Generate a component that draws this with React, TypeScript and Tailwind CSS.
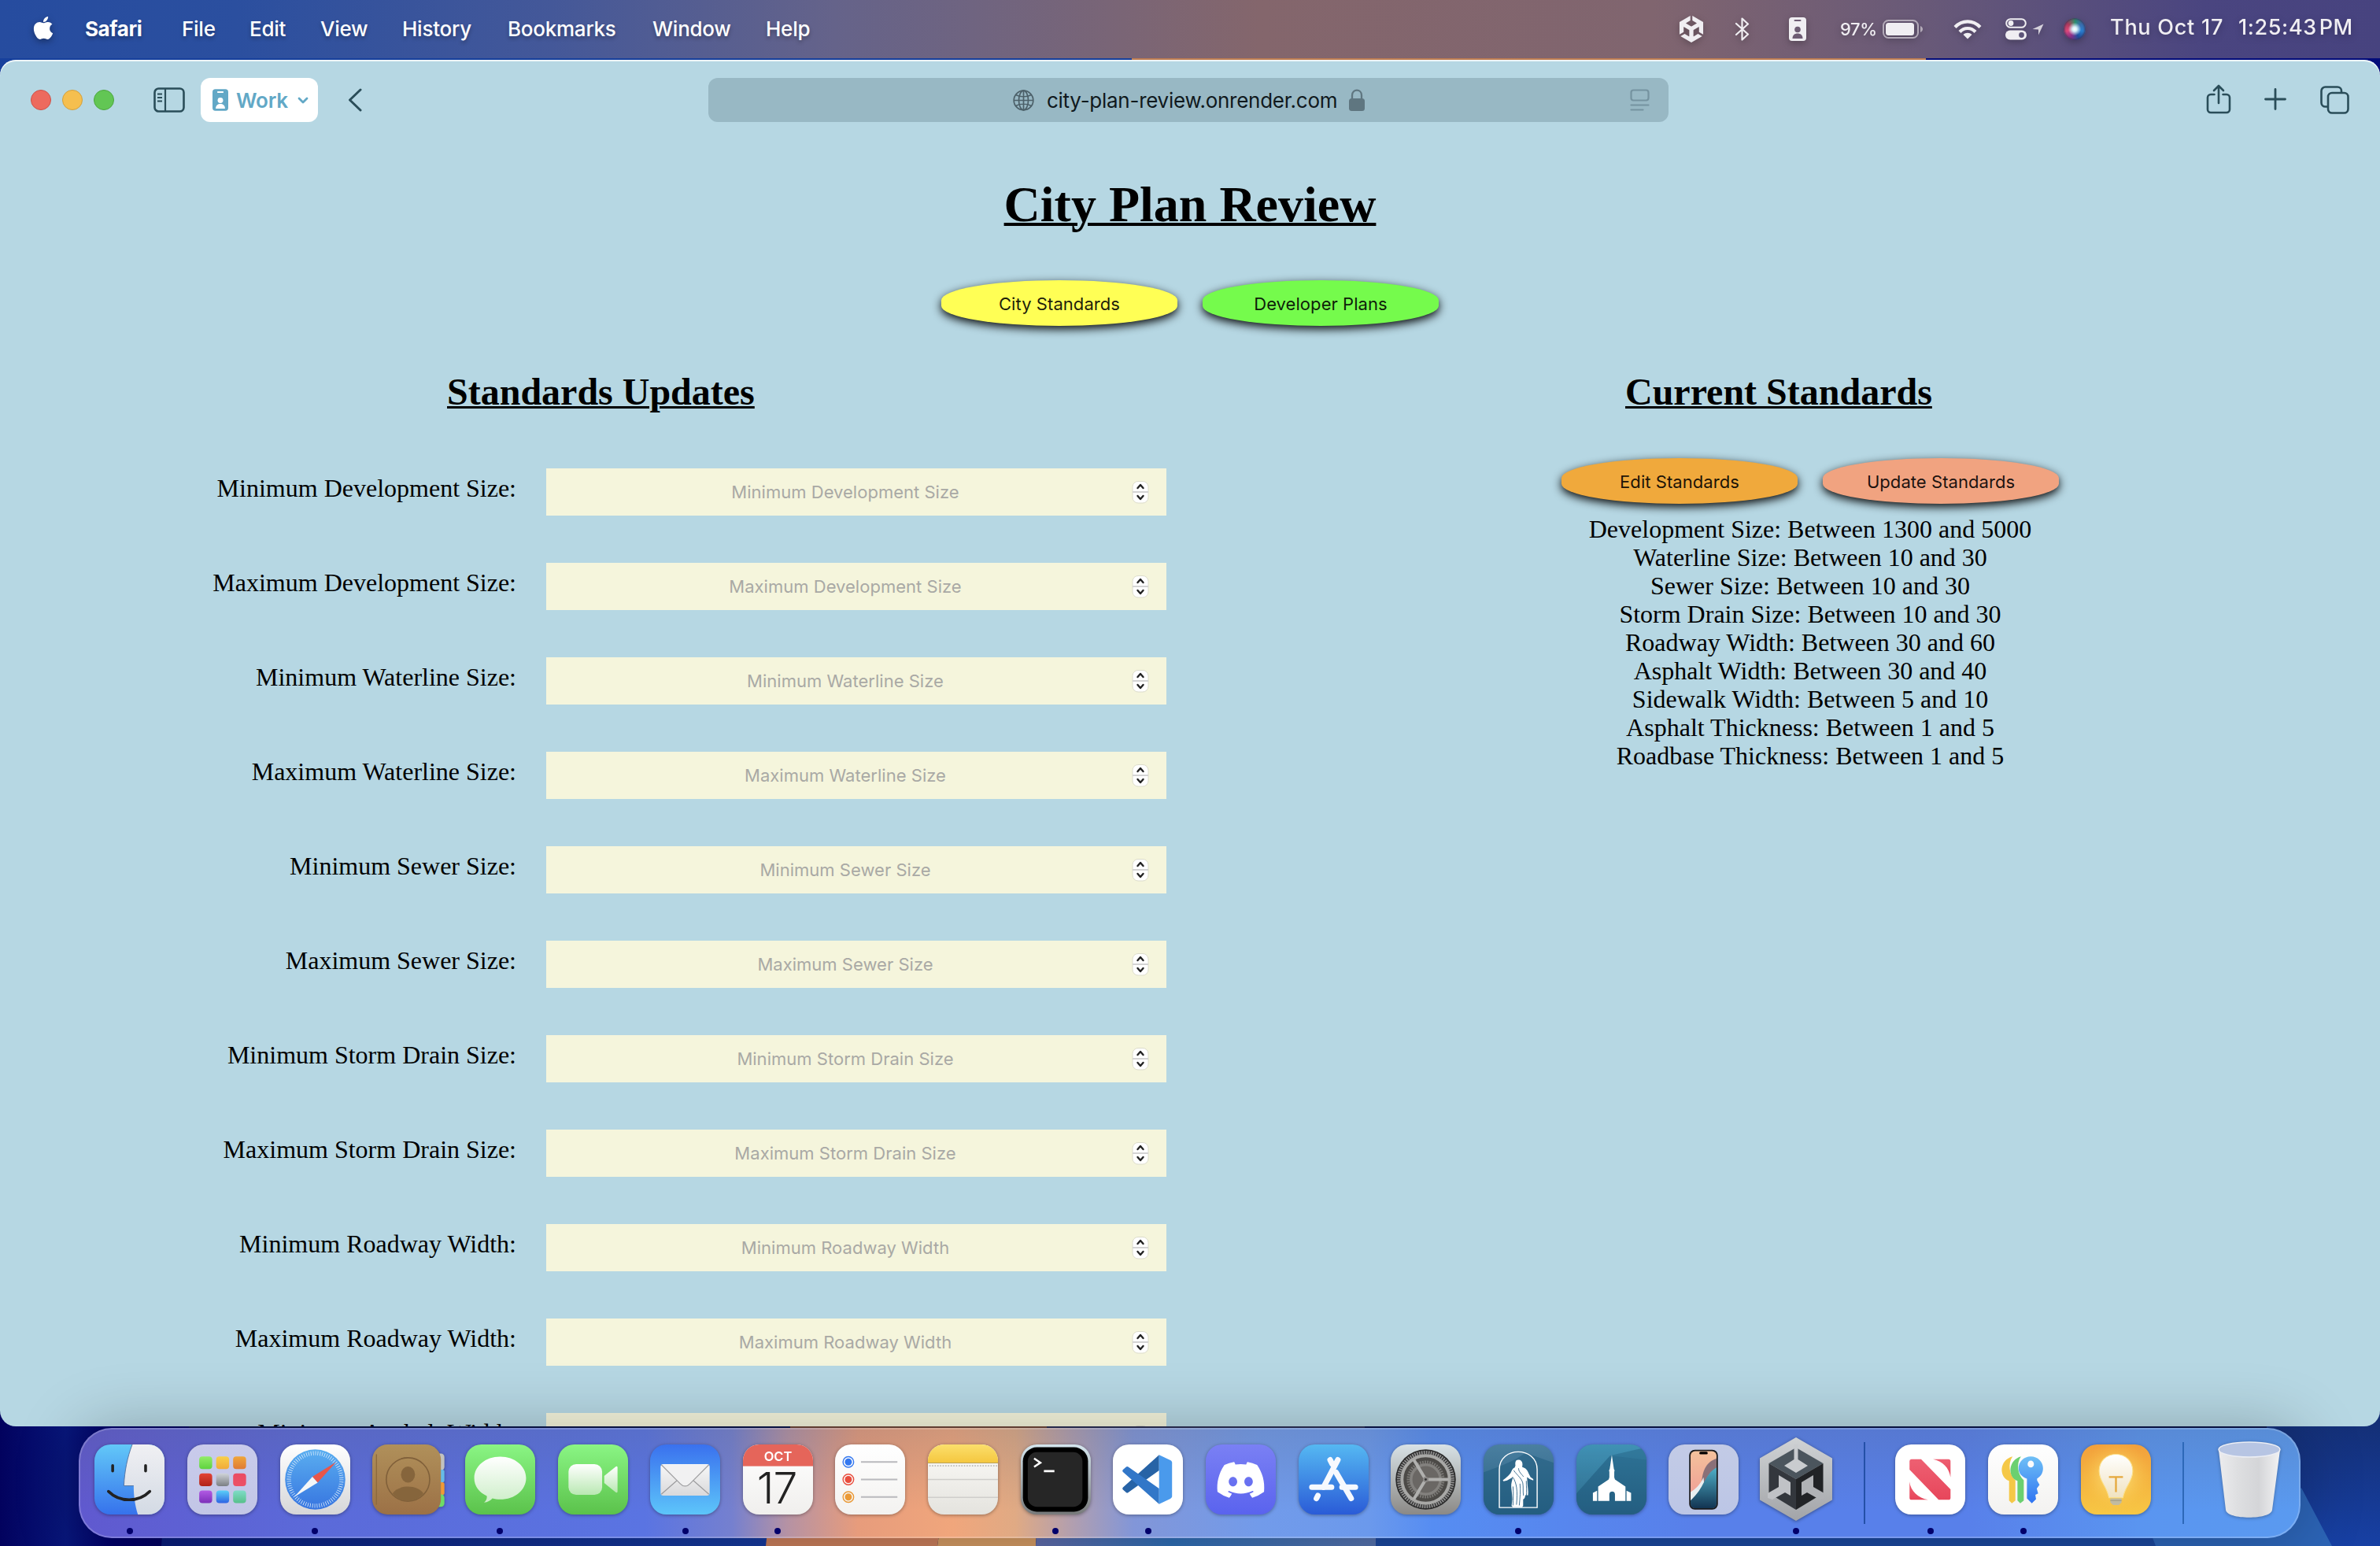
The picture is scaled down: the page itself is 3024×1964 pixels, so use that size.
import React from "react";
import { SiUnity } from "react-icons/si";
import { FaApple, FaDiscord } from "react-icons/fa";

const rows = [
  "Minimum Development Size",
  "Maximum Development Size",
  "Minimum Waterline Size",
  "Maximum Waterline Size",
  "Minimum Sewer Size",
  "Maximum Sewer Size",
  "Minimum Storm Drain Size",
  "Maximum Storm Drain Size",
  "Minimum Roadway Width",
  "Maximum Roadway Width",
  "Minimum Asphalt Width",
];

const standards = [
  "Development Size: Between 1300 and 5000",
  "Waterline Size: Between 10 and 30",
  "Sewer Size: Between 10 and 30",
  "Storm Drain Size: Between 10 and 30",
  "Roadway Width: Between 30 and 60",
  "Asphalt Width: Between 30 and 40",
  "Sidewalk Width: Between 5 and 10",
  "Asphalt Thickness: Between 1 and 5",
  "Roadbase Thickness: Between 1 and 5",
];

const menus = [
  { label: "Safari", cls: "w-[123px] font-bold tracking-[-0.4px]" },
  { label: "File", cls: "w-[86px]" },
  { label: "Edit", cls: "w-[90px]" },
  { label: "View", cls: "w-[104px]" },
  { label: "History", cls: "w-[134px]" },
  { label: "Bookmarks", cls: "w-[184px]" },
  { label: "Window", cls: "w-[144px]" },
  { label: "Help", cls: "w-[1161px]" },
];

function BadgeIcon({ cls, hole }: { cls: string; hole: string }) {
  return (
    <svg className={cls} viewBox="0 0 22 30">
      <rect width="22" height="30" rx="4" fill="currentColor" />
      <rect x="6.5" y="3" width="9" height="2" rx="1" fill={hole} />
      <circle cx="11" cy="15.5" r="3.8" fill={hole} />
      <path d="M4.5 27c0-4.500 3-6.500 6.500-6.500s6.500 2 6.500 6.500z" fill={hole} />
    </svg>
  );
}

function MenuBar() {
  return (
    <header className="flex h-[74px] shrink-0 items-center bg-[linear-gradient(90deg,#264c9f_0px,#2b4f9f_300px,#445899_700px,#65638a_1060px,#84666c_1600px,#80656f_2100px,#685978_2450px,#4a4580_2800px,#47437f_3024px)] pl-[41px] text-[26px] font-medium text-white">
      <FaApple className="-mt-1 mr-[39px] h-[33px] w-[28px] drop-shadow-[0_3px_4px_rgba(0,0,0,0.35)]" />
      <nav className="flex tracking-[-0.25px] [text-shadow:0_3px_5px_rgba(0,0,0,0.3)]">
        {menus.map((m) => (
          <span key={m.label} className={"-mt-[2px] whitespace-nowrap " + m.cls}>
            {m.label}
          </span>
        ))}
      </nav>
      <div className="flex items-center text-[#f0eef2] drop-shadow-[0_3px_4px_rgba(0,0,0,0.25)]">
        <SiUnity className="-ml-[2px] h-[34px] w-[34px]" />
        <svg className="ml-[38px] h-[30px] w-[20px]" viewBox="0 0 20 30" fill="none" stroke="currentColor" strokeWidth="2.200" strokeLinejoin="round" strokeLinecap="round">
          <path d="M2 8l15 13.500-7.500 7V1.500L17 8.500 2 22" />
        </svg>
        <BadgeIcon cls="ml-[49px] h-[30px] w-[22px]" hole="#6e5c74" />
        <span className="ml-[43px] w-[54px] text-[22px] tracking-[-0.4px]">97%</span>
        <svg className="h-[24px] w-[52px]" viewBox="0 0 52 24">
          <rect x="1" y="1" width="44" height="22" rx="6.500" fill="none" stroke="#b3aab8" strokeWidth="2" />
          <rect x="4" y="4" width="36" height="16" rx="3.500" fill="currentColor" />
          <path d="M48 8c4 1.500 4 6.500 0 8z" fill="#b3aab8" />
        </svg>
        <svg className="ml-[38px] h-[26px] w-[36px]" viewBox="0 0 36 26" fill="none" stroke="currentColor" strokeWidth="4.200">
          <path d="M2 10.500c9-9.500 23-9.500 32 0" />
          <path d="M8 16.500c5.500-6 14.500-6 20 0" />
          <path d="M18 25.500l-5.500-5.500c3-3 8-3 11 0z" fill="currentColor" stroke="none" />
        </svg>
        <svg className="ml-[30px] h-[28px] w-[27px]" viewBox="0 0 27 28">
          <rect x="1.200" y="1.200" width="24.600" height="10.600" rx="5.300" fill="none" stroke="currentColor" strokeWidth="2" />
          <circle cx="7" cy="6.500" r="3.400" fill="currentColor" />
          <rect x="0" y="15.500" width="27" height="12" rx="6" fill="currentColor" />
          <circle cx="20.500" cy="21.500" r="3.400" fill="#5d5478" />
        </svg>
        <svg className="ml-[7px] h-[15px] w-[15px]" viewBox="0 0 15 15">
          <path d="M14.500.500L8 14.500V7.500L.500 7z" fill="#d6d2dc" />
        </svg>
        <span className="ml-[25px] size-[28px] rounded-full bg-[radial-gradient(circle_at_50%_50%,#fff_0%,#d8f0f8_14%,transparent_42%),conic-gradient(from_0deg,#2c8f6c,#3a6fae,#2a7fd0,#1e4e9e,#8a2f8a,#e0487a,#b03a5c,#3b8a66)] shadow-[inset_0_0_3px_1px_#3a3358]" />
        <span className="-mt-[4px] ml-[31px] w-[163px] text-[27px] tracking-[0.75px] whitespace-nowrap">Thu Oct 17</span>
        <span className="-mt-[4px] text-[27px] tracking-[0.6px] whitespace-nowrap">1:25:43&#8202;PM</span>
      </div>
    </header>
  );
}

function Toolbar() {
  return (
    <div className="flex h-[102px] shrink-0 items-center pl-[39px] text-[#2a4d59]">
      <div className="flex gap-[14px]">
        <span className="size-[26px] rounded-full border border-[#cf5047] bg-[#ed6a5e]" />
        <span className="size-[26px] rounded-full border border-[#d3a03c] bg-[#f5bf4f]" />
        <span className="size-[26px] rounded-full border border-[#4ca63d] bg-[#62c654]" />
      </div>
      <svg className="ml-[50px] h-[32px] w-[40px]" viewBox="0 0 40 32" fill="none" stroke="currentColor" strokeWidth="2.600">
        <rect x="1.500" y="1.500" width="37" height="29" rx="5" />
        <path d="M15 2v28M5 8.500h6M5 13h6M5 17.500h6" strokeWidth="2.200" />
      </svg>
      <div className="ml-[20px] flex h-[56px] w-[149px] items-center rounded-[12px] bg-white pl-[15px] text-[#62a8c6]">
        <BadgeIcon cls="h-[28px] w-[20px]" hole="#fff" />
        <span className="ml-[10px] w-[78px] text-[26px] font-semibold tracking-[-0.2px]">Work</span>
        <svg className="h-[9px] w-[14px]" viewBox="0 0 14 9" fill="none" stroke="currentColor" strokeWidth="2.800" strokeLinecap="round" strokeLinejoin="round">
          <path d="M2 2l5 5 5-5" />
        </svg>
      </div>
      <svg className="ml-[38px] h-[30px] w-[18px]" viewBox="0 0 18 30" fill="none" stroke="currentColor" strokeWidth="3" strokeLinecap="round" strokeLinejoin="round">
        <path d="M16 2L2.500 15 16 28" />
      </svg>
      <div className="ml-[440px] flex h-[56px] w-[1220px] items-center rounded-[12px] bg-[#98b8c4] text-[#10191d]">
        <svg className="ml-[387px] size-[27px] text-[#4c6069]" viewBox="0 0 27 27" fill="none" stroke="currentColor" strokeWidth="1.700">
          <circle cx="13.500" cy="13.500" r="12.300" />
          <ellipse cx="13.500" cy="13.500" rx="6" ry="12.300" />
          <path d="M13.500 1v25M1 13.500h25M3.500 6.500c6 3 14 3 20 0M3.500 20.500c6-3 14-3 20 0" />
        </svg>
        <span className="ml-[16px] w-[384px] text-[26px] tracking-[-0.27px] whitespace-nowrap">city-plan-review.onrender.com</span>
        <svg className="h-[28px] w-[20px] text-[#5f7680]" viewBox="0 0 20 28">
          <rect y="12" width="20" height="16" rx="3.500" fill="currentColor" />
          <path d="M4 13V8c0-8.500 12-8.500 12 0v5" fill="none" stroke="currentColor" strokeWidth="2.300" />
        </svg>
        <svg className="ml-[337px] h-[28px] w-[25px] text-[#7593a0]" viewBox="0 0 25 28" fill="none" stroke="currentColor" strokeWidth="2.200" strokeLinecap="round">
          <rect x="1.500" y="1.500" width="22" height="13" rx="3" />
          <path d="M1.500 20.500h22M1.500 26.500h15" />
        </svg>
      </div>
      <svg className="-mt-[2px] ml-[683px] h-[38px] w-[32px]" viewBox="0 0 32 38" fill="none" stroke="currentColor" strokeWidth="2.600" strokeLinecap="round" strokeLinejoin="round">
        <path d="M10.500 13H6a4 4 0 0 0-4 4v15a4 4 0 0 0 4 4h20a4 4 0 0 0 4-4V17a4 4 0 0 0-4-4h-4.500M16 24V2M10 8l6-6 6 6" />
      </svg>
      <svg className="-mt-[2px] ml-[42px] size-[28px]" viewBox="0 0 28 28" fill="none" stroke="currentColor" strokeWidth="2.800" strokeLinecap="round">
        <path d="M14 1.500v25M1.500 14h25" />
      </svg>
      <svg className="-mt-[1px] ml-[43px] h-[36px] w-[37px]" viewBox="0 0 37 36" fill="none" stroke="currentColor" strokeWidth="2.600" strokeLinejoin="round">
        <rect x="10" y="9" width="25.500" height="25.500" rx="5" />
        <path d="M10 26.500H6.500a5 5 0 0 1-5-5v-15a5 5 0 0 1 5-5h15.500a5 5 0 0 1 5 5V9" />
      </svg>
    </div>
  );
}

function OvalButton({ label, color }: { label: string; color: string }) {
  return (
    <button
      className={
        "h-[58px] w-[300px] rounded-[50%/44%] pt-[2px] text-[22px] leading-[56px] tracking-[0.06px] text-black/90 shadow-[0_4px_12px_rgba(0,0,0,0.95)] " + color
      }
    >
      {label}
    </button>
  );
}

function Stepper() {
  return (
    <svg className="h-[30px] w-[22px]" viewBox="0 0 22 30" fill="none">
      <rect x="1" y="1.500" width="20" height="27.500" rx="7" fill="#fff" stroke="#dcdccb" />
      <path d="M1 15h20" stroke="#d4d4d4" strokeWidth="2" />
      <path d="M7.500 10l3.500-4 3.500 4M7.500 20l3.500 4 3.500-4" stroke="#222" strokeWidth="2.400" strokeLinecap="round" strokeLinejoin="round" />
    </svg>
  );
}

function Page() {
  return (
    <main className="flex flex-1 flex-col pt-[46px] font-['Liberation_Serif',serif] text-black">
      <h1 className="text-center text-[64px] leading-[72px] font-bold underline decoration-[4px] underline-offset-[2px]">City Plan Review</h1>
      <div className="mt-[60px] flex justify-center gap-[32px] font-['Inter',sans-serif]">
        <OvalButton label="City Standards" color="bg-[#ffff55]" />
        <OvalButton label="Developer Plans" color="bg-[#75fb4c]" />
      </div>
      <div className="mt-[57px] flex">
        <section className="w-[1482px]">
          <h2 className="mb-[70px] pl-[568px] text-[48px] leading-[54px] font-bold underline decoration-[3px] underline-offset-[2px]">Standards Updates</h2>
          <div className="flex flex-col gap-[60px]">
            {rows.map((label) => (
              <div key={label} className="flex h-[60px]">
                <label className="mr-[38px] w-[656px] pt-[7px] text-right text-[32px] leading-[36px] whitespace-nowrap">{label}:</label>
                <div className="flex w-[788px] items-center bg-[#f5f5dc] pr-[22px] pl-[16px] font-['Inter',sans-serif] text-[22px] tracking-[0.02px] text-[#a9a9a5]">
                  <span className="w-[728px] pt-[1px] text-center whitespace-nowrap">{label}</span>
                  <Stepper />
                </div>
              </div>
            ))}
          </div>
        </section>
        <section className="ml-[502px] w-[632px]">
          <h2 className="pl-[81px] text-[48px] leading-[54px] font-bold underline decoration-[3px] underline-offset-[2px]">Current Standards</h2>
          <div className="mt-[57px] flex gap-[32px] font-['Inter',sans-serif]">
            <OvalButton label="Edit Standards" color="bg-[#f0a93c]" />
            <OvalButton label="Update Standards" color="bg-[#f1a380]" />
          </div>
          <ul className="mt-[14px] text-center text-[32px] leading-[36px]">
            {standards.map((s) => (
              <li key={s}>{s}</li>
            ))}
          </ul>
        </section>
      </div>
    </main>
  );
}

function Grad({ id, a, b }: { id: string; a: string; b: string }) {
  return (
    <linearGradient id={id} x1="0" y1="0" x2="0" y2="1">
      <stop offset="0" stopColor={a} />
      <stop offset="1" stopColor={b} />
    </linearGradient>
  );
}

function Tile({ id, a, b, children }: { id: string; a: string; b: string; children?: React.ReactNode }) {
  return (
    <svg className="size-[89px] overflow-visible drop-shadow-[0_1px_2px_rgba(0,0,0,0.35)]" viewBox="0 0 100 100">
      <defs>
        <Grad id={id} a={a} b={b} />
        <clipPath id={id + "-clip"}>
          <rect width="100" height="100" rx="23" />
        </clipPath>
      </defs>
      <rect width="100" height="100" rx="23" fill={`url(#${id})`} />
      <g clipPath={`url(#${id}-clip)`}>{children}</g>
    </svg>
  );
}

const Finder = (
  <Tile id="finder" a="#62c8f8" b="#3672ec">
    <defs><Grad id="finder-r" a="#f0f0f3" b="#d3dae4" /></defs>
    <path d="M54 0C47 18 43 38 42 59h14c0 16 2 28 6 41h38V0z" fill="url(#finder-r)" />
    <path d="M54 0C47 18 43 38 42 59h14" fill="none" stroke="#4d6f9f" strokeWidth="1" />
    <path d="M26 30v8M73 30v8M20 67c16 16 43 16 59 0" fill="none" stroke="#222" strokeWidth="4" strokeLinecap="round" />
  </Tile>
);

const padColors = [
  ["#93ec68", "#5fd340"], ["#f9d049", "#f0aa3a"], ["#f0a63a", "#df7a35"],
  ["#e34335", "#b02418"], ["#cfd3d8", "#7b7f84"], ["#ea4c62", "#ec5166"],
  ["#b25be4", "#7c2fb9"], ["#5bd0f8", "#2d63e4"], ["#7fdcc8", "#57c08a"],
];
const Launchpad = (
  <Tile id="launch" a="#c9cbeb" b="#c2c6e6">
    {padColors.map(([a, b], i) => (
      <g key={i}>
        <defs><Grad id={"pad" + i} a={a} b={b} /></defs>
        <rect x={17 + (i % 3) * 24.200} y={17 + Math.floor(i / 3) * 24.300} width="18.500" height="18.200" rx="4.500" fill={`url(#pad${i})`} />
      </g>
    ))}
  </Tile>
);

const Safari = (
  <Tile id="safari" a="#ffffff" b="#d6d6d8">
    <defs><Grad id="safari-c" a="#5aaef0" b="#3775e0" /></defs>
    <circle cx="50" cy="50" r="43" fill="url(#safari-c)" />
    <circle cx="50" cy="50" r="37.500" fill="none" stroke="#d9ebfb" strokeWidth="6" strokeDasharray="0.9 2.370" />
    <path d="M80 25L53.500 54.500 46 46z" fill="#e8564a" />
    <path d="M20 75L46 46l7.500 8.500z" fill="#f4f6f8" />
  </Tile>
);

const Contacts = (
  <svg className="size-[89px] overflow-visible drop-shadow-[0_1px_2px_rgba(0,0,0,0.35)]" viewBox="0 0 100 100">
    <defs><Grad id="cont" a="#b0905a" b="#9c7146" /></defs>
    <rect x="86" y="13" width="17" height="24" rx="5" fill="#c2c2c0" />
    <rect x="86" y="36" width="17" height="18" rx="3" fill="#66bbe8" />
    <rect x="86" y="54" width="17" height="18" rx="3" fill="#f09a37" />
    <rect x="86" y="71" width="17" height="18" rx="5" fill="#6fdc66" />
    <rect width="98" height="100" rx="22" fill="url(#cont)" />
    <path d="M6 14v72" stroke="#8c6a3c" strokeWidth="1.500" />
    <circle cx="51" cy="50" r="31" fill="none" stroke="#80603a" strokeWidth="1.800" />
    <ellipse cx="51" cy="43" rx="10" ry="11.500" fill="#86653c" />
    <path d="M29 70c8-13 36-13 44 0-11 14-33 14-44 0z" fill="#86653c" />
  </svg>
);

const Messages = (
  <Tile id="msg" a="#8af584" b="#5bc24b">
    <defs><Grad id="msg-b" a="#ffffff" b="#cdeec8" /></defs>
    <path d="M50 17.500c21 0 37 13.500 37 30.500S71 78.500 50 78.500c-4 0-8-.500-11-1.500-3 3-7 5.500-12 6 3-3 4.500-6 4-9.500C20 68.500 13 59.500 13 48c0-17 16-30.500 37-30.500z" fill="url(#msg-b)" />
  </Tile>
);

const FaceTime = (
  <Tile id="ft" a="#8af584" b="#5bc24b">
    <defs><Grad id="ft-b" a="#ffffff" b="#b9e8b2" /></defs>
    <rect x="15" y="28" width="48" height="44" rx="11" fill="url(#ft-b)" />
    <path d="M66 45l16-13c2-1.500 3-.500 3 1.500v33c0 2-1 3-3 1.500L66 55z" fill="url(#ft-b)" />
  </Tile>
);

const Mail = (
  <Tile id="mail" a="#3a71ee" b="#5dc5fa">
    <defs><Grad id="mail-e" a="#f8f8f8" b="#d9d9db" /></defs>
    <rect x="15" y="28" width="70" height="45" rx="4" fill="url(#mail-e)" />
    <path d="M16 71l24-21M84 71L60 50" stroke="#9b9b9d" strokeWidth="1.300" />
    <path d="M16 29l27 27c4 4.500 10 4.500 14 0l27-27" fill="#f1f1f2" stroke="#a2a2a4" strokeWidth="1.500" />
  </Tile>
);

const Calendar = (
  <Tile id="cal" a="#ffffff" b="#f0efed">
    <rect width="100" height="31" fill="#e5655a" />
    <text x="50" y="23.500" textAnchor="middle" fontSize="18.500" fontWeight="600" fill="#fff" fontFamily="Inter, sans-serif">OCT</text>
    <text x="48.500" y="84.500" textAnchor="middle" fontSize="62" fontWeight="300" fill="#222" fontFamily="Inter, sans-serif" letterSpacing="-1">17</text>
  </Tile>
);

const Reminders = (
  <Tile id="rem" a="#ffffff" b="#f3f2f0">
    {["#3478f0", "#e94d3d", "#ea9936"].map((c, i) => (
      <g key={c}>
        <circle cx="19" cy={25 + i * 25} r="7.600" fill="none" stroke={c} strokeWidth="1.600" />
        <circle cx="19" cy={25 + i * 25} r="5" fill={c} />
        <path d={`M37 ${25 + i * 25}h52`} stroke="#b9b9bd" strokeWidth="2" />
      </g>
    ))}
  </Tile>
);

const Notes = (
  <Tile id="notes" a="#fcfbf8" b="#e4e3de">
    <defs><Grad id="notes-y" a="#fbdf6c" b="#f5c73f" /></defs>
    <rect width="100" height="26" fill="url(#notes-y)" />
    <path d="M0 26.500h100" stroke="#b9a15a" strokeWidth="1.200" />
    <path d="M2 30.500h98" stroke="#b9b8b4" strokeWidth="1.800" strokeDasharray="1.800 2" />
    <path d="M0 50h100M0 75.500h100" stroke="#cfcecb" strokeWidth="1.600" />
  </Tile>
);

const Terminal = (
  <Tile id="term" a="#d5e6ee" b="#77797a">
    <rect x="3" y="4" width="93" height="92" rx="20" fill="#000" />
    <rect x="10" y="11" width="78" height="78" rx="13" fill="#262626" />
    <path d="M19 20l9 6-9 6" fill="none" stroke="#fff" strokeWidth="2.800" />
    <path d="M33 38h15" stroke="#fff" strokeWidth="3" />
  </Tile>
);

const VSCode = (
  <Tile id="vsc" a="#ffffff" b="#ffffff">
    <path d="M66 15v22L22 68.500c-1 .800-2 .800-3 0l-4.500-4c-1-1-1-2.400 0-3.400z" fill="#2763a6" />
    <path d="M66 85V63L22 32c-1-.800-2-.800-3 0l-4.500 4c-1 1-1 2.400 0 3.400z" fill="#3277c8" />
    <path d="M66 15l16 7.500c1.500.800 2.500 2 2.500 3.500v48c0 1.500-1 2.700-2.500 3.500L66 85z" fill="#4a9aec" />
  </Tile>
);

const Discord = (
  <Tile id="disc" a="#7a80f4" b="#5a63ee">
    <FaDiscord x="13.500" y="14" size={73} color="#fff" />
  </Tile>
);

const AppStore = (
  <Tile id="apps" a="#55b8f2" b="#2a5bd7">
    <g stroke="#f6f9fe" strokeWidth="8" strokeLinecap="round">
      <path d="M56 22L35.500 61M27.500 73l-2 4" />
      <path d="M19 61h28M62 61h19" />
      <path d="M45 22l3 6M53.500 40L75 77" />
    </g>
  </Tile>
);

const Settings = (
  <Tile id="set" a="#d8e2e6" b="#8b8986">
    <circle cx="50" cy="50" r="43" fill="#2b2b2b" />
    <circle cx="50" cy="50" r="38.500" fill="none" stroke="#8f8f8f" strokeWidth="5" strokeDasharray="2 1.360" />
    <circle cx="50" cy="50" r="34" fill="#4c4a47" stroke="#a8a8a6" strokeWidth="4.500" />
    <circle cx="50" cy="50" r="25" fill="none" stroke="#7a7875" strokeWidth="4" strokeDasharray="2 1.500" />
    <circle cx="50" cy="50" r="21" fill="#6a6764" stroke="#83817e" strokeWidth="4" />
    <path d="M50 50h33M50 50L33 22M50 50L33 78" stroke="#b0b0ae" strokeWidth="4.500" />
    <circle cx="50" cy="50" r="4" fill="#8a8886" />
    <circle cx="50" cy="50" r="1.600" fill="#333" />
  </Tile>
);

const Christus = (
  <Tile id="chr" a="#4a7fa0" b="#285f82">
    <path d="M60 12l40 14v74H0V40C20 32 40 26 60 12z" fill="#215c80" opacity=".55" />
    <path d="M22.500 90V36c0-34 54-34 54 0v54z" fill="none" stroke="#fff" strokeWidth="1.600" />
    <path d="M49.500 22c-4 0-4.500 4-4 8l-1 3c-3 1-4 4-6 8-2 3-5 5-7 7l-4 3 1 1.500 5-1 7-4 1.500-2c-1 6-3 10-2.500 15 .500 6 1.500 12 1.500 18l-1 9 2 2h13l1.500-2v-9c2-1 3-3 3-6h4c1-6-1-13-1-19l-.500-7 4 3 5 2v-2l-4-3c-3-5-4-11-9-13l-3-1.500c1.500-4 0-10-4.500-10z" fill="#fff" />
    <path d="M43 37c6 8 11 11 13 18 1 6 0 12 1 18M42 47c5 8 7 18 5 39M50 34c0 5 4 8 7 12M42 60c1 10 0 18 0 27M52 56c1 10 0 20-1 31M61 52c0 8 1 16 0 22" fill="none" stroke="#2d6386" strokeWidth="1" />
  </Tile>
);

const Church = (
  <Tile id="chu" a="#3f8fb2" b="#285f82">
    <path d="M0 70L48 16 100 4v96H0z" fill="#215c80" opacity=".55" />
    <path d="M48 16l52 6V0H0v70z" fill="#4aa0c0" opacity=".15" />
    <path d="M50.500 15L53.500 35l1 2-.500 2v8l1 3L70 60v20.500H55V71c0-5-8-5-8 0v9.500H31V60l15-10 1-3v-8l-.500-2 1-2z" fill="#fff" />
    <path d="M29.500 66v14.500H23.500V69zM71.500 66v14.500H78V69z" fill="#fff" />
  </Tile>
);

const Phone = (
  <Tile id="ph" a="#c3cbe6" b="#bcc6e6">
    <defs><Grad id="ph-s" a="#f4c19c" b="#ef9794" /><Grad id="ph-t" a="#4fb0c8" b="#123452" /></defs>
    <rect x="29.500" y="7.500" width="41" height="85.500" rx="8" fill="#1a1a1c" />
    <rect x="31.500" y="9.500" width="37" height="81.500" rx="6.500" fill="url(#ph-s)" />
    <path d="M68.500 20C55 25 48 35 47 58l21.500-20z" fill="#8a7078" />
    <path d="M50 47C45 58 38 64 31.500 68v18l20-22z" fill="#e8eef0" />
    <path d="M68.500 33C50 44 52 62 31.500 80v5c0 4 3 6 6.500 6h24c4 0 6.500-2.500 6.500-6.500z" fill="url(#ph-t)" />
    <rect x="44" y="10.500" width="12" height="3.600" rx="1.800" fill="#000" />
  </Tile>
);

const Unity = (
  <svg className="h-[106px] w-[94px] overflow-visible drop-shadow-[0_1px_2px_rgba(0,0,0,0.4)]" viewBox="-47 -53 94 106">
    <defs><Grad id="uni" a="#d0d3d5" b="#a2a4a8" /></defs>
    <path d="M0-53L46-26.500V26.500L0 53-46 26.500V-26.500z" fill="url(#uni)" />
    <path d="M0-40L34.500-20 0 0-34.500-20z" fill="#4b555d" />
    <path d="M-34.500-20L0 0V39L-34.500 18z" fill="#33373d" />
    <path d="M34.500-20L0 0V39L34.500 18z" fill="#212326" />
    <path d="M-2.500-44h5v19L15-17 0-8-15-17l12.500-8z" fill="#c9cccf" />
    <path d="M-22-5l15 9v17l-7-4-16 9-6-2v-6l14-8z" fill="#c0c2c6" />
    <path d="M22-5L7 4v17l7-4 16 9 6-2v-6l-14-8z" fill="#b0b2b6" />
  </svg>
);

const News = (
  <Tile id="news" a="#ffffff" b="#ffffff">
    <defs><Grad id="news-r" a="#ee6072" b="#e7465b" /></defs>
    <g fill="url(#news-r)">
      <path d="M23 21h14l42 43v12a3 3 0 0 1-3 3H62L20.500 36V24a3 3 0 0 1 2.500-3z" />
      <path d="M54 21h22a3 3 0 0 1 3 3v23C77 33 68 24 54 21z" />
      <path d="M20.500 53C22 67 33 76 47 79H23.500a3 3 0 0 1-3-3z" />
    </g>
  </Tile>
);

const Passwords = (
  <Tile id="pw" a="#ffffff" b="#f3f2f0">
    <defs><Grad id="pw-b" a="#6fc0f6" b="#2f74f2" /></defs>
    <path d="M35 17C16 22 15 46 30 52v28l4 4 5-4V51c-9-8-11-24-4-34z" fill="#f5c847" />
    <path d="M47 17C29 22 27 46 42 52v28l4 4 5-4V51c-9-8-11-24-4-34z" fill="#6bd070" />
    <path d="M61 17c10 0 17.500 7.500 17.500 17 0 7-3.500 12-8.500 14.500v3l3.500 6-4 5.500 2 7-4 2 1 6-6 6-7-7V49C48 46 43.500 41 43.500 34 43.500 24.500 51 17 61 17zm0 6a4.500 5 0 1 0 .010 10 4.500 5 0 1 0-.010-10z" fill="url(#pw-b)" />
  </Tile>
);

const Tips = (
  <Tile id="tips" a="#f2a03c" b="#f7c744">
    <defs>
      <radialGradient id="tips-g" cx=".5" cy=".45" r=".5"><stop offset="0" stopColor="#ffe98a" /><stop offset="1" stopColor="#f8c545" stopOpacity="0" /></radialGradient>
      <Grad id="tips-b" a="#ffffff" b="#f0e2c0" />
    </defs>
    <rect width="100" height="100" fill="url(#tips-g)" />
    <path d="M50 14c14 0 24 10 24 24 0 15-11 21-14 38H40C37 59 26 53 26 38c0-14 10-24 24-24z" fill="url(#tips-b)" stroke="#fbe08a" strokeWidth="1.200" />
    <path d="M40 46.500h20M50 46.500V68" stroke="#e5a83c" strokeWidth="2.600" />
    <path d="M42 77h16v6l-4 3.500h-8L42 83z" fill="#c2bba0" />
    <path d="M42 80h16" stroke="#98927c" strokeWidth="1" />
  </Tile>
);

const Trash = (
  <svg className="h-[98px] w-[80px] drop-shadow-[0_1px_2px_rgba(0,0,0,0.3)]" viewBox="0 0 80 98">
    <defs>
      <linearGradient id="tr"><stop offset="0" stopColor="#ececee" /><stop offset=".3" stopColor="#dedfe1" /><stop offset=".65" stopColor="#d4d5d8" /><stop offset="1" stopColor="#f2f2f3" /></linearGradient>
    </defs>
    <path d="M1 11l9 76c1 13 58 13 59 0l10-76z" fill="url(#tr)" />
    <ellipse cx="40" cy="10.500" rx="39" ry="9.500" fill="#b7c5e3" stroke="#eceef4" strokeWidth="1.500" />
  </svg>
);

const apps = [
  { icon: Finder, on: true }, { icon: Launchpad, on: false }, { icon: Safari, on: true }, { icon: Contacts, on: false },
  { icon: Messages, on: true }, { icon: FaceTime, on: false }, { icon: Mail, on: true }, { icon: Calendar, on: true },
  { icon: Reminders, on: false }, { icon: Notes, on: false }, { icon: Terminal, on: true }, { icon: VSCode, on: true },
  { icon: Discord, on: false }, { icon: AppStore, on: false }, { icon: Settings, on: false }, { icon: Christus, on: true },
  { icon: Church, on: false }, { icon: Phone, on: false }, { icon: Unity, on: true },
];
const recent = [{ icon: News, on: true }, { icon: Passwords, on: true }, { icon: Tips, on: false }];

function DockItem({ icon, on }: { icon: React.ReactNode; on: boolean }) {
  return (
    <div className="flex h-full w-[117.65px] shrink-0 flex-col items-center pt-[7px]">
      <div className="flex h-[112px] items-center justify-center">{icon}</div>
      {on && <span className="mt-[6px] size-[8px] rounded-full bg-[#02006b]" />}
    </div>
  );
}

function Dock() {
  return (
    <footer className="relative mt-[2px] ml-[100px] flex h-[140px] w-[2823px] shrink-0 rounded-[42px] border-2 border-white/20 bg-[linear-gradient(180deg,rgba(80,90,110,0.2),rgba(80,90,110,0)_75%),linear-gradient(90deg,#6059cf_0px,#5b6ad9_300px,#5a74e2_720px,#7580cf_830px,#b592a4_900px,#e79c7c_990px,#f0a67c_1110px,#e0aa84_1190px,#b39fae_1260px,#8296d8_1340px,#729bea_1500px,#6b99ec_1640px,#568df2_1720px,#5880ea_2050px,#5880ea_2400px,#5a95f0_2620px,#5a9af0_2823px)] bg-origin-border pl-[4px] shadow-[0_0_80px_rgba(0,0,0,0.25)]">
      {apps.map((a, i) => (
        <DockItem key={i} icon={a.icon} on={a.on} />
      ))}
      <span className="mt-[16px] ml-[27px] h-[104px] w-[2px] bg-[#2450a8]" />
      <div className="ml-[24px] flex">
        {recent.map((a, i) => (
          <DockItem key={i} icon={a.icon} on={a.on} />
        ))}
      </div>
      <span className="mt-[16px] ml-[26px] h-[104px] w-[2px] bg-[#2d68b8]" />
      <div className="mt-[15px] ml-[43px]">{Trash}</div>
    </footer>
  );
}

function Wallpaper() {
  return (
    <svg className="absolute inset-0 h-[1964px] w-[3024px]" viewBox="0 0 3024 1964">
      <defs>
        <linearGradient id="wl"><stop offset="0" stopColor="#02025e" /><stop offset=".35" stopColor="#08167a" /><stop offset=".6" stopColor="#010066" /><stop offset="1" stopColor="#03045c" /></linearGradient>
        <linearGradient id="wb"><stop offset="0" stopColor="#0a1d78" /><stop offset="1" stopColor="#16399a" /></linearGradient>
        <linearGradient id="wc"><stop offset="0" stopColor="#5f6aa8" /><stop offset=".4" stopColor="#2e6cb2" /><stop offset="1" stopColor="#5470aa" /></linearGradient>
        <linearGradient id="wr" x1="0" y1="0" x2="0" y2="1"><stop offset="0" stopColor="#122458" /><stop offset="1" stopColor="#1740a4" /></linearGradient>
      </defs>
      <rect width="3024" height="900" fill="#17409c" />
      <rect x="1438" width="1010" height="500" fill="#c07e52" />
      <rect x="2447" width="577" height="500" fill="#030c7a" />
      <rect y="1700" width="3024" height="264" fill="#0a1448" />
      <rect y="1700" width="240" height="264" fill="url(#wl)" />
      <path d="M1004 1700h326v200h-326z" fill="#6e4638" />
      <path d="M1330 1700h404v200h-404z" fill="#2b2e54" />
      <path d="M210 1900h770l-6 64H205z" fill="url(#wb)" />
      <path d="M980 1900h220l-9 64H973z" fill="#c67c5a" />
      <path d="M1200 1900h120l-4 64h-125z" fill="#d09862" />
      <path d="M1320 1900h428v64h-432z" fill="url(#wc)" />
      <path d="M1748 1900h1000v64H1748z" fill="#1b479c" />
      <path d="M2880 1700h144v264h-144z" fill="url(#wr)" />
      <path d="M2715 1900h200l9-10 39 74h-224z" fill="#2c64b6" />
    </svg>
  );
}

export default function App() {
  return (
    <div className="relative h-[1964px] w-[3024px] overflow-hidden font-['Inter',sans-serif]">
      <Wallpaper />
      <div className="relative flex h-full flex-col">
        <MenuBar />
        <div className="mt-[2px] flex h-[1736px] shrink-0 flex-col overflow-hidden rounded-[20px] bg-[#b6d7e3] shadow-[inset_0_2px_0_rgba(255,255,255,0.75)]">
          <Toolbar />
          <Page />
        </div>
        <Dock />
      </div>
    </div>
  );
}
